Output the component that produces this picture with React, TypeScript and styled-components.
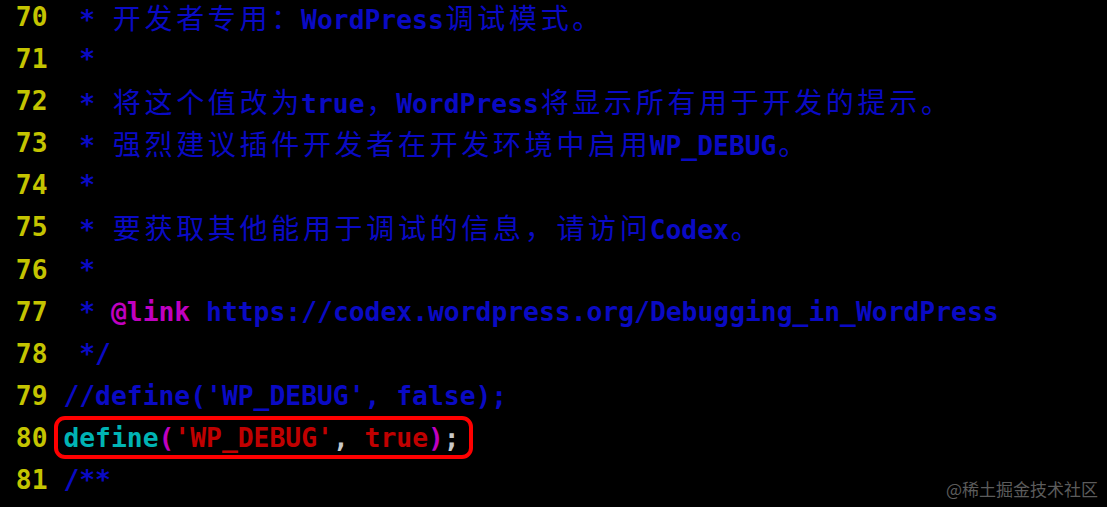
import React from "react";
import styled, { createGlobalStyle } from "styled-components";

// vim colours
const C = {
  num: "#c4c400",
  comment: "#0a0ac4",
  special: "#c000c0",
  func: "#00b4b4",
  str: "#c00000",
  plain: "#c8c8c8",
};

const CELL = 15.85;

interface IToken {
  t: string;
  c: string;
}

interface ILine {
  n: number;
  tokens: IToken[];
  mark?: boolean;
}

const cm = (t: string): IToken => ({ t, c: C.comment });

const lines: ILine[] = [
  { n: 70, tokens: [cm(" * 开发者专用：WordPress调试模式。")] },
  { n: 71, tokens: [cm(" *")] },
  { n: 72, tokens: [cm(" * 将这个值改为true，WordPress将显示所有用于开发的提示。")] },
  { n: 73, tokens: [cm(" * 强烈建议插件开发者在开发环境中启用WP_DEBUG。")] },
  { n: 74, tokens: [cm(" *")] },
  { n: 75, tokens: [cm(" * 要获取其他能用于调试的信息，请访问Codex。")] },
  { n: 76, tokens: [cm(" *")] },
  {
    n: 77,
    tokens: [
      cm(" * "),
      { t: "@link", c: C.special },
      cm(" https://codex.wordpress.org/Debugging_in_WordPress"),
    ],
  },
  { n: 78, tokens: [cm(" */")] },
  { n: 79, tokens: [cm("//define('WP_DEBUG', false);")] },
  {
    n: 80,
    mark: true,
    tokens: [
      { t: "define", c: C.func },
      { t: "(", c: C.special },
      { t: "'WP_DEBUG'", c: C.str },
      { t: ", ", c: C.plain },
      { t: "true", c: C.str },
      { t: ")", c: C.special },
      { t: ";", c: C.plain },
    ],
  },
  { n: 81, tokens: [cm("/**")] },
  { n: 82, tokens: [cm(" * zh_CN本地化设置：启用ICP备案号显示")] },
];

const wide = /[\u3000-\u303f\u4e00-\u9fff\uff00-\uffef]/;

// split a token so that every CJK char takes two cells, like in the terminal
function renderText(text: string) {
  const out: React.ReactNode[] = [];
  let buf = "";
  Array.from(text).forEach((ch, i) => {
    if (wide.test(ch)) {
      if (buf) out.push(buf);
      buf = "";
      out.push(<Wide key={i}>{ch}</Wide>);
    } else {
      buf += ch;
    }
  });
  if (buf) out.push(buf);
  return out;
}

function renderTokens(tokens: IToken[]) {
  return tokens.map((tk, i) => (
    <Tok key={i} $color={tk.c}>
      {renderText(tk.t)}
    </Tok>
  ));
}

function App() {
  return (
    <>
      <GlobalStyle />
      <Editor>
        <Lines>
          {lines.map((line) => (
            <Row key={line.n}>
              <Gutter>{line.n}</Gutter>
              <Code>
                {line.mark ? (
                  <Mark>{renderTokens(line.tokens)}</Mark>
                ) : (
                  renderTokens(line.tokens)
                )}
              </Code>
            </Row>
          ))}
        </Lines>
        <Watermark>@稀土掘金技术社区</Watermark>
      </Editor>
    </>
  );
}

const GlobalStyle = createGlobalStyle`
  html, body {
    margin: 0;
    padding: 0;
    background: #000;
  }
`;

const Editor = styled.div`
  position: relative;
  width: 1107px;
  height: 507px;
  overflow: hidden;
  background: #000;
  font-family: "DejaVu Sans Mono", "Noto Sans CJK SC", monospace;
  font-size: 26.33px;
  font-weight: bold;
`;

const Lines = styled.div`
  display: flex;
  flex-direction: column;
`;

const Row = styled.div`
  display: flex;
  align-items: flex-start;
  height: 42.1px;
  line-height: 34px;
  white-space: pre;
`;

const Gutter = styled.span`
  flex: 0 0 ${CELL * 3}px;
  padding-right: ${CELL}px;
  text-align: right;
  color: ${C.num};
`;

const Code = styled.span`
  flex: 1;
`;

const Tok = styled.span<{ $color: string }>`
  color: ${(props) => props.$color};
`;

const Wide = styled.span`
  display: inline-block;
  width: ${CELL * 2}px;
  font-family: "Noto Sans CJK SC", sans-serif;
  font-size: 28px;
  font-weight: normal;
  text-align: center;
`;

const Mark = styled.span`
  position: relative;
  display: inline-block;
  &::after {
    content: "";
    position: absolute;
    left: -9px;
    right: -13px;
    top: -5px;
    bottom: -4px;
    border: 4px solid #ff0000;
    border-radius: 11px;
  }
`;

const Watermark = styled.div`
  position: absolute;
  right: 9px;
  bottom: 7px;
  font-family: "Noto Sans CJK SC", sans-serif;
  font-size: 17px;
  font-weight: normal;
  line-height: 22px;
  color: #5c5c5c;
`;

export default App;
